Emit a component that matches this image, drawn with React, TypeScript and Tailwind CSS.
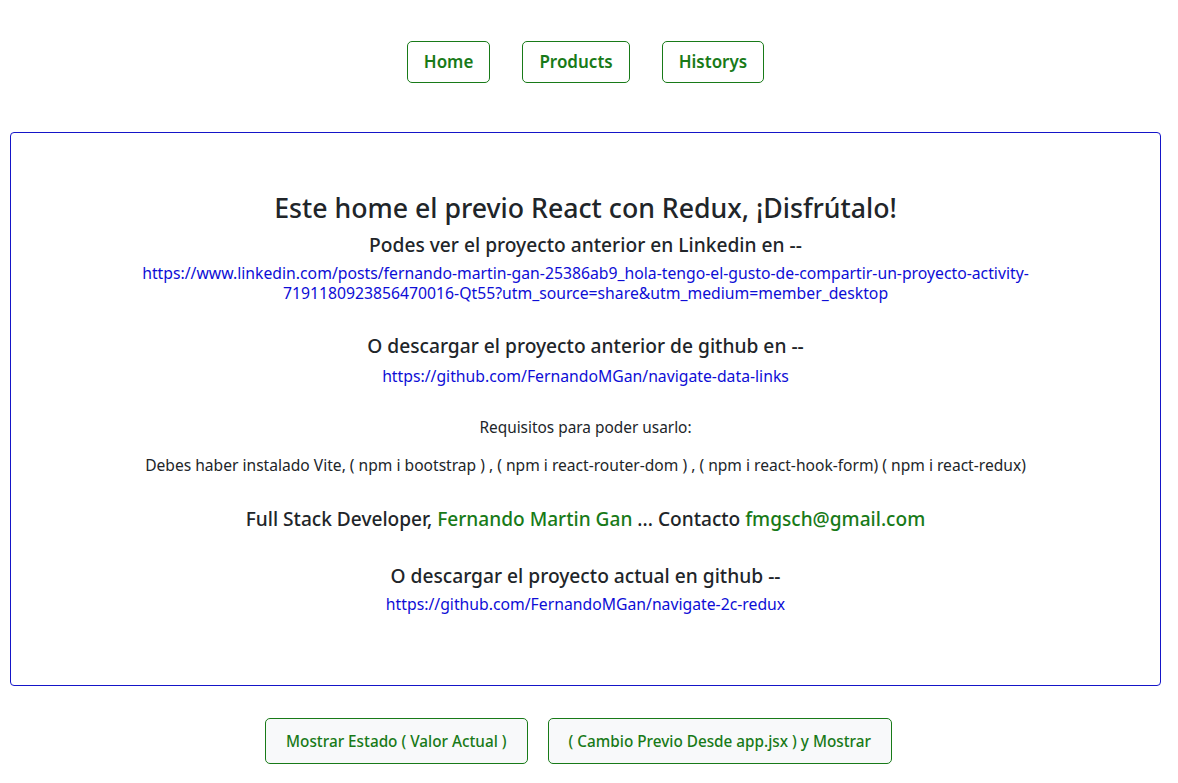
import React from "react";

const navItems = ["Home", "Products", "Historys"];

export default function App() {
  return (
    <div className="w-[1171px] min-h-screen bg-white font-['Noto_Sans',sans-serif] text-[#212529]">
      <nav className="flex justify-center gap-8 pt-[41px]">
        {navItems.map((item) => (
          <button
            key={item}
            className="h-[42px] rounded-[5px] border border-[#187a18] px-4 text-[17px] font-semibold text-[#187a18]"
          >
            {item}
          </button>
        ))}
      </nav>

      <main className="mx-[10px] mt-[49px] flex h-[554px] flex-col items-center rounded-[4px] border border-[#1515c8] pt-[58px] text-center">
        <h3 className="text-[26.7px] font-medium leading-[34px]">
          Este home el previo React con Redux, ¡Disfrútalo!
        </h3>
        <h5 className="mt-[8px] text-[19.2px] font-medium leading-[24px]">
          Podes ver el proyecto anterior en Linkedin en --
        </h5>
        <a href="#" className="mt-[6px] text-[15.75px] leading-[20px] text-[#0d0dd6]">
          https://www.linkedin.com/posts/fernando-martin-gan-25386ab9_hola-tengo-el-gusto-de-compartir-un-proyecto-activity-
          <br />
          7191180923856470016-Qt55?utm_source=share&amp;utm_medium=member_desktop
        </a>

        <h5 className="mt-[31px] text-[19.2px] font-medium leading-[24px]">
          O descargar el proyecto anterior de github en --
        </h5>
        <a href="#" className="mt-[8px] text-[15.75px] leading-[20px] text-[#0d0dd6]">
          https://github.com/FernandoMGan/navigate-data-links
        </a>

        <p className="mt-[32px] text-[15.4px] leading-[20px]">Requisitos para poder usarlo:</p>
        <p className="mt-[17px] text-[15.6px] leading-[20px]">
          Debes haber instalado Vite, ( npm i bootstrap ) , ( npm i react-router-dom ) , ( npm i
          react-hook-form) ( npm i react-redux)
        </p>

        <h4 className="mt-[30px] text-[19.1px] font-medium leading-[28px]">
          Full Stack Developer, <span className="text-[#187a18]">Fernando Martin Gan</span> ... Contacto{" "}
          <span className="text-[#187a18]">fmgsch@gmail.com</span>
        </h4>

        <h5 className="mt-[31px] text-[19.2px] font-medium leading-[24px]">
          O descargar el proyecto actual en github --
        </h5>
        <a href="#" className="mt-[6px] text-[15.75px] leading-[20px] text-[#0d0dd6]">
          https://github.com/FernandoMGan/navigate-2c-redux
        </a>
      </main>

      <div className="flex justify-center gap-[20px] pr-[14px] pt-[32px]">
        <button className="h-[46px] rounded-[5px] border border-[#187a18] bg-[#f8f9fa] px-5 text-[15.3px] font-medium text-[#187a18]">
          Mostrar Estado ( Valor Actual )
        </button>
        <button className="h-[46px] rounded-[5px] border border-[#187a18] bg-[#f8f9fa] px-5 text-[15.3px] font-medium text-[#187a18]">
          ( Cambio Previo Desde app.jsx ) y Mostrar
        </button>
      </div>
    </div>
  );
}
